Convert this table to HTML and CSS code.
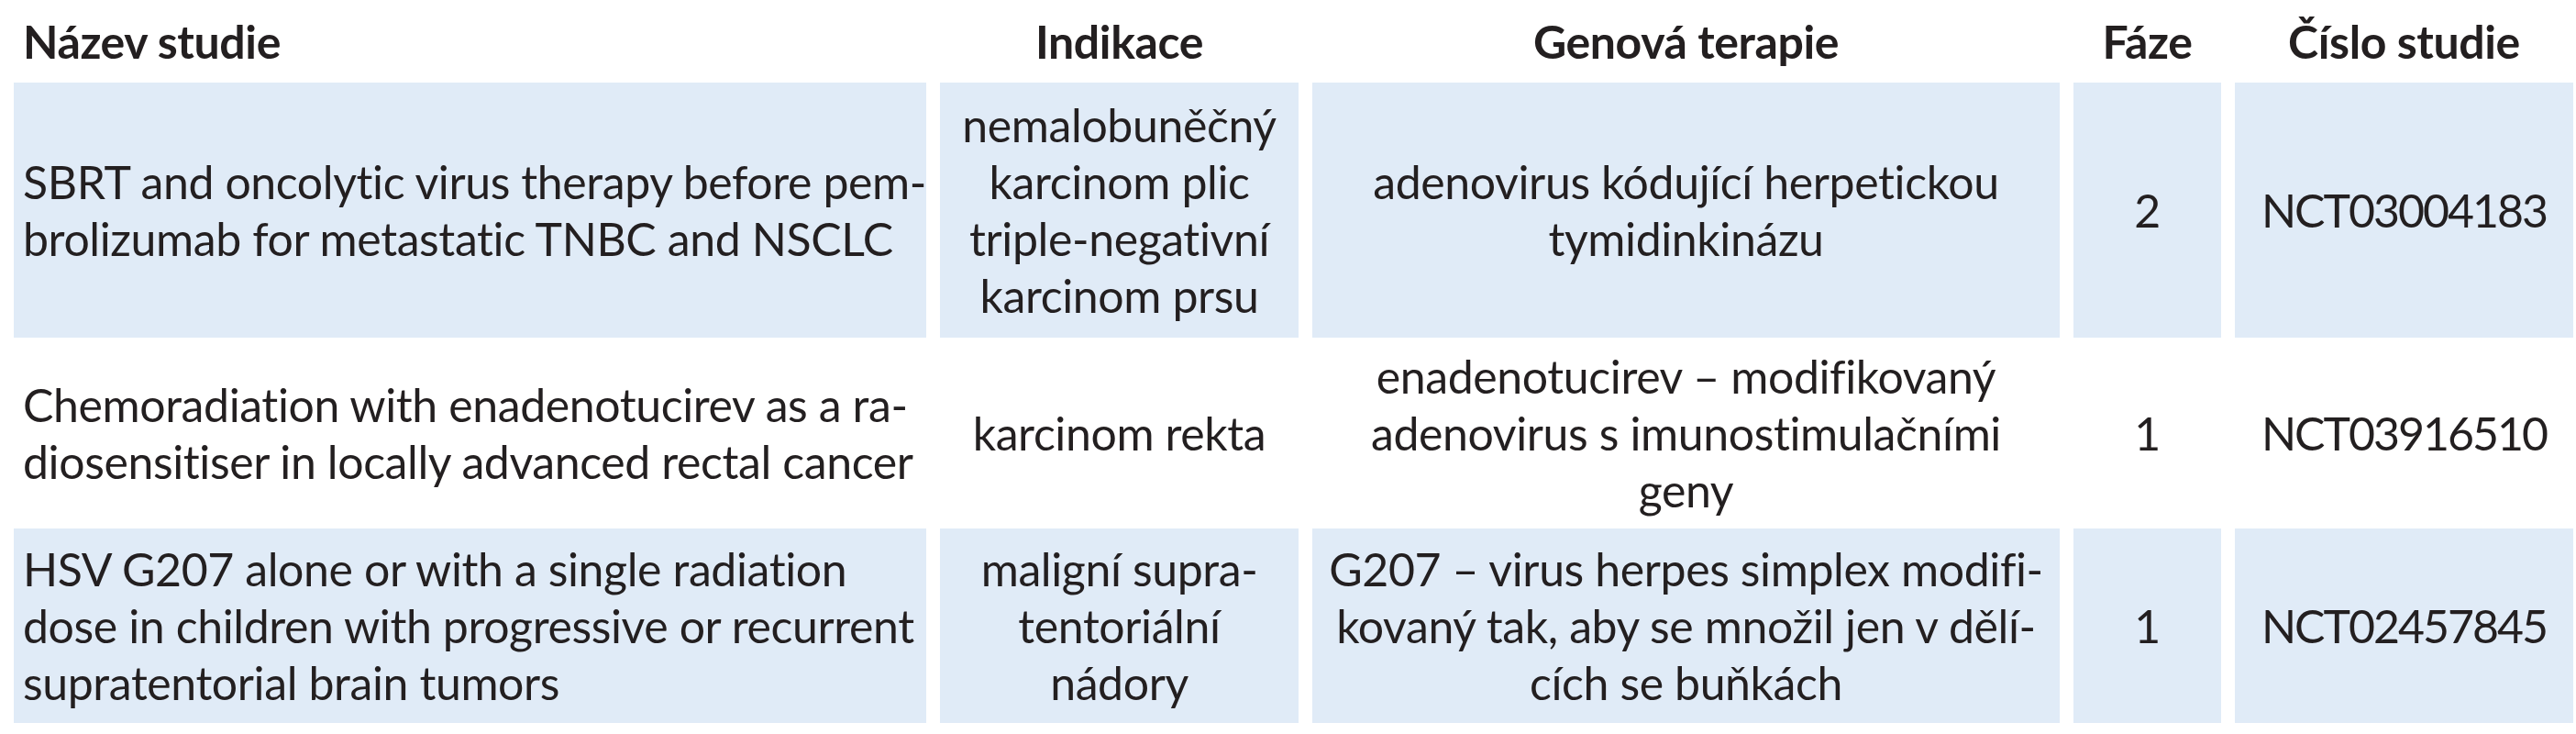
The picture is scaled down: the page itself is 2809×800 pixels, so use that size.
FILE: index.html
```html
<!DOCTYPE html>
<html lang="cs">
<head>
<meta charset="utf-8">
<title>Studie</title>
<link rel="stylesheet" href="styles.css">
</head>
<body>
<div class="grid">
  <div class="cell head left">Název studie</div>
  <div class="cell head center">Indikace</div>
  <div class="cell head center">Genová terapie</div>
  <div class="cell head center">Fáze</div>
  <div class="cell head center">Číslo studie</div>

  <div class="cell blue left"><p>SBRT and oncolytic virus therapy before pem-<br>brolizumab for metastatic TNBC and NSCLC</p></div>
  <div class="cell blue center"><p>nemalobuněčný<br>karcinom plic<br>triple-negativní<br>karcinom prsu</p></div>
  <div class="cell blue center"><p>adenovirus kódující herpetickou<br>tymidinkinázu</p></div>
  <div class="cell blue center"><p>2</p></div>
  <div class="cell blue center"><p class="num">NCT03004183</p></div>

  <div class="cell left"><p>Chemoradiation with enadenotucirev as a ra-<br>diosensitiser in locally advanced rectal cancer</p></div>
  <div class="cell center"><p>karcinom rekta</p></div>
  <div class="cell center"><p>enadenotucirev – modifikovaný<br>adenovirus s imunostimulačními<br>geny</p></div>
  <div class="cell center"><p>1</p></div>
  <div class="cell center"><p class="num">NCT03916510</p></div>

  <div class="cell blue left"><p>HSV G207 alone or with a single radiation<br>dose in children with progressive or recurrent<br>supratentorial brain tumors</p></div>
  <div class="cell blue center"><p>maligní supra-<br>tentoriální<br>nádory</p></div>
  <div class="cell blue center"><p>G207 – virus herpes simplex modifi-<br>kovaný tak, aby se množil jen v dělí-<br>cích se buňkách</p></div>
  <div class="cell blue center"><p>1</p></div>
  <div class="cell blue center"><p class="num">NCT02457845</p></div>
</div>
</body>
</html>
```

FILE: styles.css
```css
html, body {
  margin: 0;
  padding: 0;
  background: #ffffff;
}

body {
  font-family: Lato, "Open Sans", "Noto Sans", sans-serif;
  font-size: 50px;
  line-height: 62px;
  letter-spacing: -0.4px;
  color: #231f20;
}

.grid {
  display: grid;
  grid-template-columns: 995px 391px 815px 161px 369px;
  grid-template-rows: 60px 278px 178px 212px;
  gap: 15px;
  padding: 15px 0 0 15px;
}

.cell {
  display: flex;
  align-items: center;
  white-space: nowrap;
  min-width: 0;
}

.cell p {
  margin: 0;
}

.left {
  justify-content: flex-start;
  text-align: left;
  padding-left: 10px;
}

.center {
  justify-content: center;
  text-align: center;
}

.head {
  font-weight: 700;
}

.blue {
  background: #e0ebf7;
}

.num {
  letter-spacing: -2px;
}
```
